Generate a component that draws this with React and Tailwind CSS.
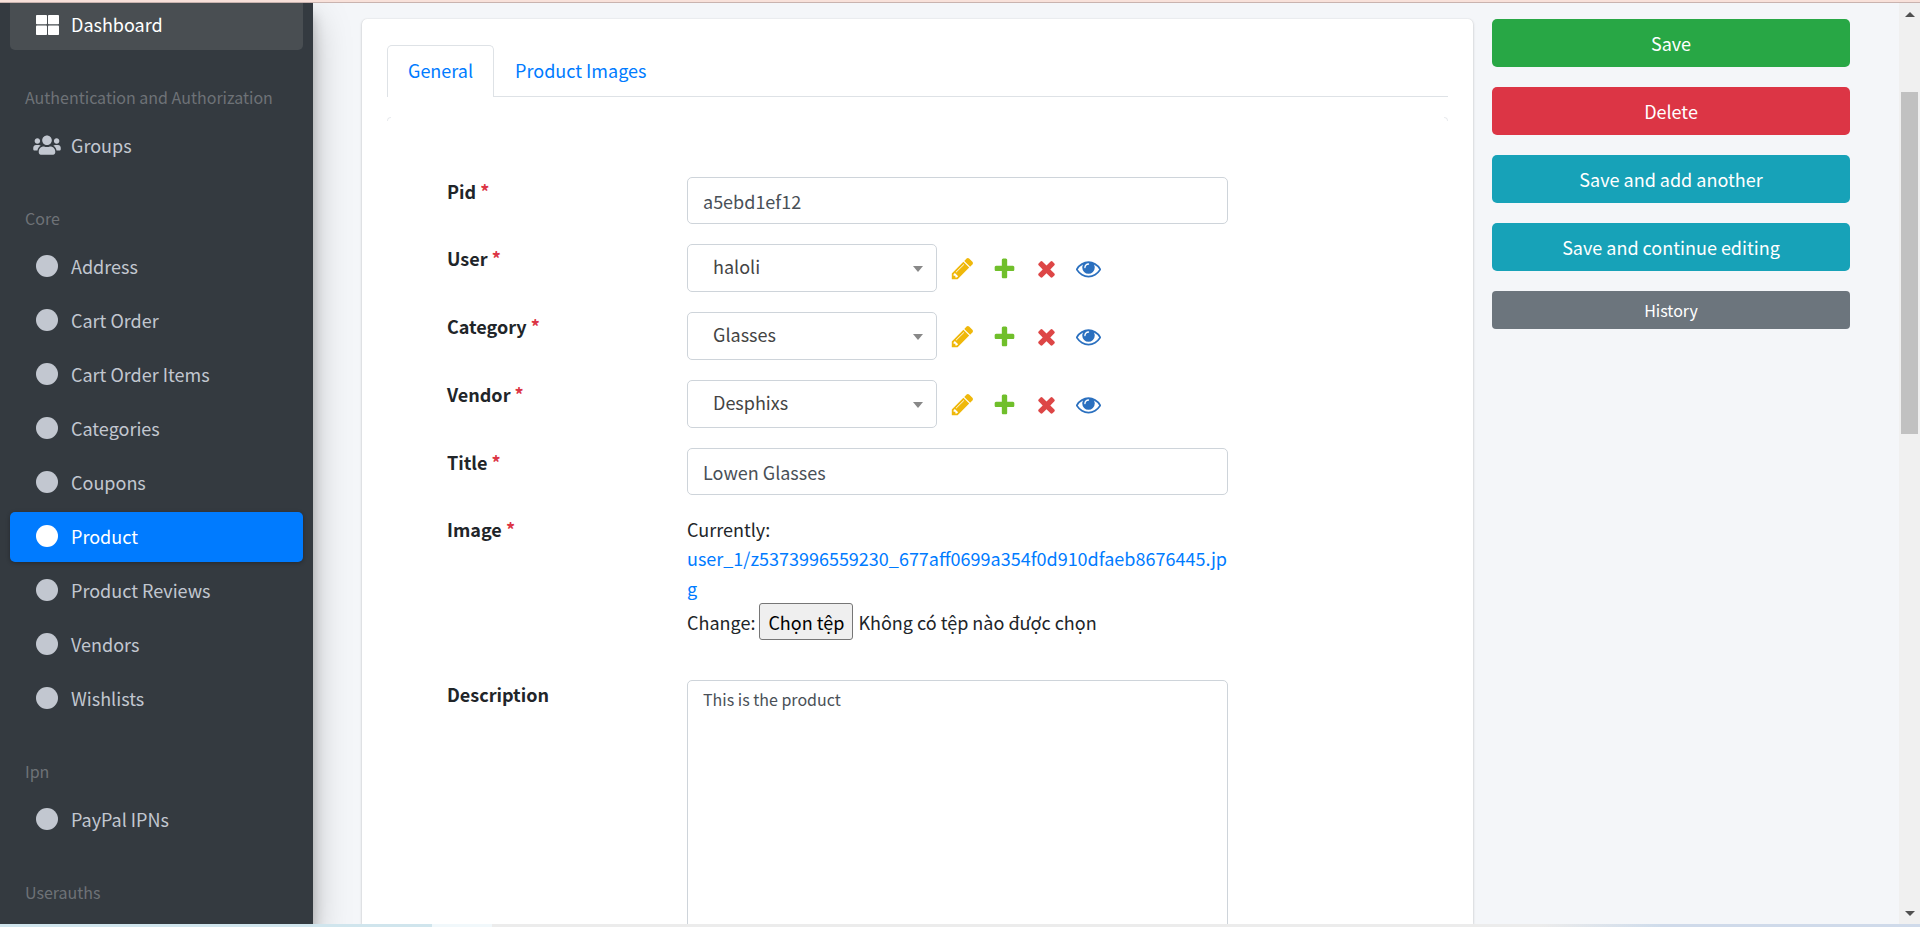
import { FaUsers } from "react-icons/fa";

const FIELD = "w-full rounded-[5px] border border-[#ced4da] bg-white text-[#495057] outline-none";

function DashboardIcon() {
  return (
    <svg viewBox="0 0 23 20" className="h-5 w-[23px]" fill="currentColor" aria-hidden="true">
      <rect x="0" y="0" width="11" height="9.2" rx="0.8" />
      <rect x="12" y="0" width="11" height="9.2" rx="0.8" />
      <rect x="0" y="10.4" width="11" height="9.6" rx="0.8" />
      <rect x="12" y="10.4" width="11" height="9.6" rx="0.8" />
    </svg>
  );
}

function CircleIcon() {
  return (
    <svg viewBox="0 0 22 22" className="size-[22px]" fill="currentColor" aria-hidden="true">
      <circle cx="11" cy="11" r="11" />
    </svg>
  );
}

function NavItem({ label, icon, active }) {
  return (
    <li>
      <a
        href="#"
        className={
          active
            ? "flex h-[50px] items-center rounded-[5px] bg-[#007bff] pb-0.5 pl-5 text-white shadow-[0_1px_4px_rgba(0,0,0,0.3)]"
            : "flex h-[50px] items-center rounded-[5px] pb-0.5 pl-5 text-[#c2c7d0]"
        }
      >
        <span className="mr-[7px] flex w-[34px] justify-center">{icon || <CircleIcon />}</span>
        {label}
      </a>
    </li>
  );
}

function NavHeader({ children }) {
  return <li className="h-[63px] pl-[15px] pt-[31px] text-[16px] leading-6 text-[#6e7277]">{children}</li>;
}

const CORE_BEFORE = ["Address", "Cart Order", "Cart Order Items", "Categories", "Coupons"];
const CORE_AFTER = ["Product Reviews", "Vendors", "Wishlists"];

function Sidebar() {
  return (
    <nav
      aria-label="Main"
      className="relative z-10 w-[313px] shrink-0 bg-[#343a40] px-2.5 shadow-[0_17px_35px_rgba(0,0,0,0.25),0_12px_12px_rgba(0,0,0,0.22)]"
    >
      <ul className="flex flex-col gap-1">
        <li>
          <a href="#" className="flex h-[47px] items-center rounded-b-[5px] bg-[#494e52] pb-1 pl-5 text-white">
            <span className="mr-[7px] flex w-[34px] justify-center">
              <DashboardIcon />
            </span>
            Dashboard
          </a>
        </li>
        <NavHeader>Authentication and Authorization</NavHeader>
        <NavItem label="Groups" icon={<FaUsers className="h-[22px] w-7" />} />
        <NavHeader>Core</NavHeader>
        {CORE_BEFORE.map((label) => (
          <NavItem key={label} label={label} />
        ))}
        <NavItem label="Product" active />
        {CORE_AFTER.map((label) => (
          <NavItem key={label} label={label} />
        ))}
        <NavHeader>Ipn</NavHeader>
        <NavItem label="PayPal IPNs" />
        <NavHeader>Userauths</NavHeader>
      </ul>
    </nav>
  );
}

const ACTIONS = [
  {
    name: "Change",
    color: "text-[#efb80b]",
    d: "M491 1536l91-91-235-235-91 91v107h128v128h107zm523-928q0-22-22-22-10 0-17 7l-542 542q-7 7-7 17 0 22 22 22 10 0 17-7l542-542q7-7 7-17zm-54-192l416 416-832 832h-416v-416zm683 96q0 53-37 90l-166 166-416-416 166-165q36-38 90-38 53 0 91 38l235 234q37 39 37 91z",
  },
  {
    name: "Add",
    color: "text-[#70bf2b]",
    d: "M1600 796v192q0 40-28 68t-68 28h-416v416q0 40-28 68t-68 28h-192q-40 0-68-28t-28-68v-416h-416q-40 0-68-28t-28-68v-192q0-40 28-68t68-28h416v-416q0-40 28-68t68-28h192q40 0 68 28t28 68v416h416q40 0 68 28t28 68z",
  },
  {
    name: "Delete",
    color: "text-[#dd4646]",
    d: "M1490 1322q0 40-28 68l-136 136q-28 28-68 28t-68-28l-294-294-294 294q-28 28-68 28t-68-28l-136-136q-28-28-28-68t28-68l294-294-294-294q-28-28-28-68t28-68l136-136q28-28 68-28t68 28l294 294 294-294q28-28 68-28t68 28l136 136q28 28 28 68t-28 68l-294 294 294 294q28 28 28 68z",
  },
  {
    name: "View",
    color: "text-[#2b70bf]",
    d: "M1664 960q-152-236-381-353 61 104 61 225 0 185-131.5 316.5t-316.5 131.5-316.5-131.5-131.5-316.5q0-121 61-225-229 117-381 353 133 205 333.5 326.5t434.5 121.5 434.5-121.5 333.5-326.5zm-720-384q0-20-14-34t-34-14q-125 0-214.5 89.5t-89.5 214.5q0 20 14 34t34 14 34-14 14-34q0-86 61-147t147-61q20 0 34-14t14-34zm848 384q0 34-20 69-140 230-376.5 368.5t-499.5 138.5-499.5-139-376.5-368q-20-35-20-69t20-69q140-229 376.5-368t499.5-139 499.5 139 376.5 368q20 35 20 69z",
  },
];

function FormRow({ label, htmlFor, required, children }) {
  return (
    <div className="grid grid-cols-[240px_minmax(0,541px)]">
      <label htmlFor={htmlFor} className="self-start text-[18px] font-bold leading-7 text-[#212529]">
        {label}
        {required && <span className="text-[#dc3545]"> *</span>}
      </label>
      {children}
    </div>
  );
}

function RelatedSelect({ id, value }) {
  return (
    <div className="flex items-center">
      <div className="relative w-[250px]">
        <select
          id={id}
          defaultValue={value}
          className="h-12 w-full appearance-none rounded-[5px] border border-[#ced4da] bg-white pb-1 pl-[25px] pr-8 text-[#444] outline-none"
        >
          <option>{value}</option>
        </select>
        <svg viewBox="0 0 10 6" className="pointer-events-none absolute right-3.5 top-[22px] h-1.5 w-2.5" fill="#888" aria-hidden="true">
          <path d="M0 0h10L5 6z" />
        </svg>
      </div>
      <div className="ml-[13px] flex gap-[17px]">
        {ACTIONS.map((action) => (
          <a key={action.name} href="#" aria-label={action.name + " " + id} className={action.color}>
            <svg viewBox="0 0 1792 1792" className="size-[25px]" fill="currentColor" aria-hidden="true">
              <path d={action.d} />
            </svg>
          </a>
        ))}
      </div>
    </div>
  );
}

function ProductForm() {
  return (
    <form className="flex flex-col gap-5 px-[60px]" onSubmit={(e) => e.preventDefault()}>
      <FormRow label="Pid" htmlFor="pid" required>
        <input id="pid" type="text" defaultValue="a5ebd1ef12" className={FIELD + " h-[47px] px-[15px]"} />
      </FormRow>
      <FormRow label="User" htmlFor="user" required>
        <RelatedSelect id="user" value="haloli" />
      </FormRow>
      <FormRow label="Category" htmlFor="category" required>
        <RelatedSelect id="category" value="Glasses" />
      </FormRow>
      <FormRow label="Vendor" htmlFor="vendor" required>
        <RelatedSelect id="vendor" value="Desphixs" />
      </FormRow>
      <FormRow label="Title" htmlFor="title" required>
        <input id="title" type="text" defaultValue="Lowen Glasses" className={FIELD + " h-[47px] px-[15px]"} />
      </FormRow>
      <FormRow label="Image" htmlFor="image" required>
        <div className="pb-5 leading-[30px] text-[#212529]">
          <p className="leading-7">Currently:</p>
          <a href="#" className="block break-all text-[#007bff]">
            user_1/z5373996559230_677aff0699a354f0d910dfaeb8676445.jpg
          </a>
          <div className="flex items-center">
            <span>Change:</span>
            <input id="image" type="file" className="peer sr-only" />
            <label
              htmlFor="image"
              className="ml-1 flex h-[37px] items-center rounded-[3px] border border-[#767676] bg-[#efefef] px-2 text-black"
            >
              Chọn tệp
            </label>
            <span className="ml-[5px]">Không có tệp nào được chọn</span>
          </div>
        </div>
      </FormRow>
      <FormRow label="Description" htmlFor="description">
        <textarea
          id="description"
          defaultValue="This is the product"
          className={FIELD + " h-[400px] resize-none px-[15px] py-1.5 text-[16px] leading-6"}
        />
      </FormRow>
    </form>
  );
}

function FormCard() {
  return (
    <section className="min-w-0 flex-1 rounded-t-[5px] bg-white px-[25px] pt-[26px] shadow-[0_0_1px_rgba(0,0,0,0.125),0_1px_3px_rgba(0,0,0,0.2)]">
      <div className="flex border-b border-[#dee2e6]">
        <a
          href="#"
          className="-mb-px flex h-[52px] items-center rounded-t-[5px] border border-b-0 border-[#dee2e6] bg-white px-5 pb-0.5 text-[#007bff]"
        >
          General
        </a>
        <a href="#" className="flex h-[51px] items-center px-[21px] text-[#007bff]">
          Product Images
        </a>
      </div>
      <div className="mb-14 mt-5 flex justify-between">
        <span className="size-1 rounded-tl-[4px] border-l border-t border-[#e9ebee]" />
        <span className="size-1 rounded-tr-[4px] border-r border-t border-[#e9ebee]" />
      </div>
      <ProductForm />
    </section>
  );
}

function ActionPanel() {
  return (
    <aside className="flex w-[358px] shrink-0 flex-col gap-5 text-white">
      <button type="submit" className="h-12 rounded-[5px] bg-[#28a745]">Save</button>
      <button type="button" className="h-12 rounded-[5px] bg-[#dc3545]">Delete</button>
      <button type="button" className="h-12 rounded-[5px] bg-[#17a2b8]">Save and add another</button>
      <button type="button" className="h-12 rounded-[5px] bg-[#17a2b8]">Save and continue editing</button>
      <button type="button" className="h-[38px] rounded-[4px] bg-[#6c757d] text-[16px]">History</button>
    </aside>
  );
}

function ScrollTrack() {
  return (
    <div className="flex w-[21px] shrink-0 flex-col items-center bg-[#f0f0f0]" aria-hidden="true">
      <svg viewBox="0 0 10 5" className="mt-[9px] h-[5px] w-2.5" fill="#505050">
        <path d="M5 0l5 5H0z" />
      </svg>
      <div className="mt-[75px] h-[342px] w-[17px] bg-[#c1c1c1]" />
      <svg viewBox="0 0 10 5" className="mb-2 mt-auto h-[5px] w-2.5" fill="#505050">
        <path d="M0 0h10L5 5z" />
      </svg>
    </div>
  );
}

export default function App() {
  return (
    <div className="flex h-screen flex-col overflow-hidden bg-[#f4f6f9] font-['Noto_Sans_CJK_SC','Noto_Sans',sans-serif] text-[18px]">
      <div className="h-[3px] shrink-0 border-b border-[#c9b3af] bg-[#f8e1da]" />
      <div className="flex min-h-0 flex-1 overflow-hidden">
        <Sidebar />
        <main className="flex min-w-0 flex-1 gap-[19px] pl-[49px] pr-[49px] pt-4">
          <FormCard />
          <ActionPanel />
        </main>
        <ScrollTrack />
      </div>
      <div className="flex h-[3px] shrink-0">
        <div className="w-[432px] bg-[#d0e5ed]" />
        <div className="w-[60px] bg-[#f1f8fb]" />
        <div className="flex-1 bg-[#ececec]" />
        <div className="w-[120px] bg-linear-to-r from-[#ececec] to-[#cfdceb]" />
        <div className="w-[260px] bg-[#cfdaea]" />
      </div>
    </div>
  );
}
